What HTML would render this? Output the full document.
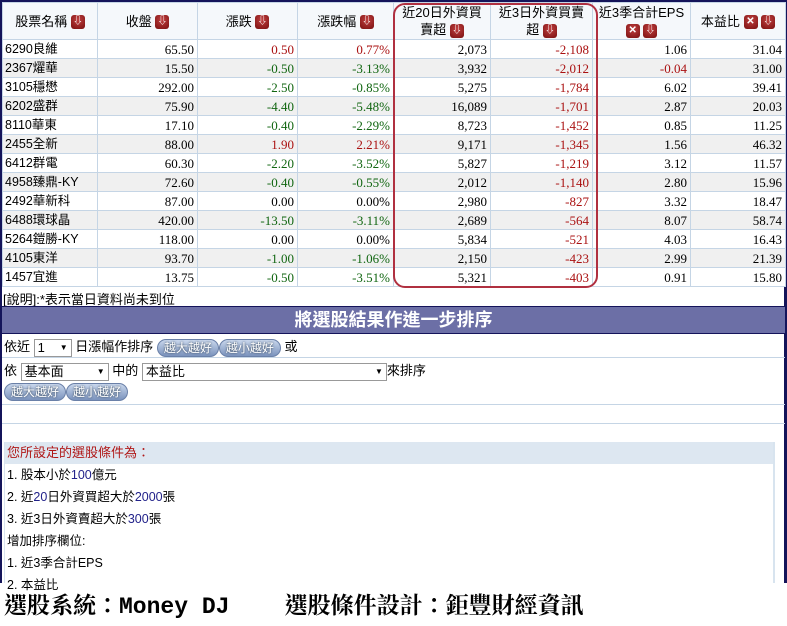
<!DOCTYPE html><html><head><meta charset="utf-8"><style>
*{margin:0;padding:0;box-sizing:border-box}
body{width:787px;height:626px;background:#fff;font-family:"Liberation Serif","Noto Serif CJK TC","Noto Sans CJK TC",serif;font-size:13px;color:#000;position:relative;overflow:hidden}
.a{position:absolute}
.nav{background:#14145a}
table{border-collapse:collapse;position:absolute;left:2px;top:2px;width:783px;table-layout:fixed}
td,th{border:1px solid #c5d5e5;height:19px;padding:0 3px;font-weight:normal;white-space:nowrap;overflow:hidden;line-height:17px}
th{height:37px;background:#f5f8fb;font-family:"Liberation Sans","Noto Sans CJK TC",sans-serif;font-size:13px;line-height:17px;white-space:normal}
td{text-align:right}
td:first-child{text-align:left;padding-left:2px;font-family:"Liberation Sans","Noto Sans CJK TC",sans-serif;font-size:12.5px}
tr:nth-child(odd) td{background:#f0f0f0}
tr:nth-child(even) td{background:#fff}
.r{color:#a11}.g{color:#161}
.ic{display:inline-block;width:14px;height:14px;border-radius:3px;background:radial-gradient(circle at 50% 35%,#c04040,#7a1010);color:#fff;font-size:10px;line-height:14px;text-align:center;vertical-align:middle;font-weight:bold}
.btn{display:inline-block;border-radius:9px;background:linear-gradient(#c9d7ec,#7b93bd);border:1px solid #6a80a8;color:#fff;font-size:12px;padding:0 6px;height:18px;line-height:16px;text-shadow:0 0 2px #234;vertical-align:middle}
.sel{display:inline-block;border:1px solid #999;background:#fff;height:18px;line-height:16px;vertical-align:middle;padding-left:3px;font-size:13px;position:relative}
.sel:after{content:"▼";position:absolute;right:3px;font-size:8px;top:0}
.sans{font-family:"Liberation Sans","Noto Sans CJK TC",sans-serif}
.b{color:#22228a}
</style></head><body>
<div class="a nav" style="left:0;top:0;width:787px;height:2px"></div>
<div class="a nav" style="left:0;top:0;width:2px;height:583px"></div>
<div class="a nav" style="left:784px;top:0;width:3px;height:583px"></div>
<table>
<colgroup><col style="width:95px"><col style="width:100px"><col style="width:100px"><col style="width:96px"><col style="width:97px"><col style="width:102px"><col style="width:98px"><col style="width:95px"></colgroup>
<tr><th>股票名稱 <span class="ic">⇩</span></th><th>收盤 <span class="ic">⇩</span></th><th>漲跌 <span class="ic">⇩</span></th><th>漲跌幅 <span class="ic">⇩</span></th><th>近20日外資買賣超 <span class="ic">⇩</span></th><th>近3日外資買賣超 <span class="ic">⇩</span></th><th>近3季合計EPS<br><span class="ic">✕</span> <span class="ic">⇩</span></th><th>本益比 <span class="ic">✕</span> <span class="ic">⇩</span></th></tr>
<tr><td>6290良維</td><td>65.50</td><td class="r">0.50</td><td class="r">0.77%</td><td>2,073</td><td class="r">-2,108</td><td>1.06</td><td>31.04</td></tr>
<tr><td>2367燿華</td><td>15.50</td><td class="g">-0.50</td><td class="g">-3.13%</td><td>3,932</td><td class="r">-2,012</td><td class="r">-0.04</td><td>31.00</td></tr>
<tr><td>3105穩懋</td><td>292.00</td><td class="g">-2.50</td><td class="g">-0.85%</td><td>5,275</td><td class="r">-1,784</td><td>6.02</td><td>39.41</td></tr>
<tr><td>6202盛群</td><td>75.90</td><td class="g">-4.40</td><td class="g">-5.48%</td><td>16,089</td><td class="r">-1,701</td><td>2.87</td><td>20.03</td></tr>
<tr><td>8110華東</td><td>17.10</td><td class="g">-0.40</td><td class="g">-2.29%</td><td>8,723</td><td class="r">-1,452</td><td>0.85</td><td>11.25</td></tr>
<tr><td>2455全新</td><td>88.00</td><td class="r">1.90</td><td class="r">2.21%</td><td>9,171</td><td class="r">-1,345</td><td>1.56</td><td>46.32</td></tr>
<tr><td>6412群電</td><td>60.30</td><td class="g">-2.20</td><td class="g">-3.52%</td><td>5,827</td><td class="r">-1,219</td><td>3.12</td><td>11.57</td></tr>
<tr><td>4958臻鼎-KY</td><td>72.60</td><td class="g">-0.40</td><td class="g">-0.55%</td><td>2,012</td><td class="r">-1,140</td><td>2.80</td><td>15.96</td></tr>
<tr><td>2492華新科</td><td>87.00</td><td>0.00</td><td>0.00%</td><td>2,980</td><td class="r">-827</td><td>3.32</td><td>18.47</td></tr>
<tr><td>6488環球晶</td><td>420.00</td><td class="g">-13.50</td><td class="g">-3.11%</td><td>2,689</td><td class="r">-564</td><td>8.07</td><td>58.74</td></tr>
<tr><td>5264鎧勝-KY</td><td>118.00</td><td>0.00</td><td>0.00%</td><td>5,834</td><td class="r">-521</td><td>4.03</td><td>16.43</td></tr>
<tr><td>4105東洋</td><td>93.70</td><td class="g">-1.00</td><td class="g">-1.06%</td><td>2,150</td><td class="r">-423</td><td>2.99</td><td>21.39</td></tr>
<tr><td>1457宜進</td><td>13.75</td><td class="g">-0.50</td><td class="g">-3.51%</td><td>5,321</td><td class="r">-403</td><td>0.91</td><td>15.80</td></tr>
</table>
<div class="a" style="left:393px;top:3px;width:205px;height:285px;border:2px solid #b03040;border-radius:12px"></div>
<div class="a sans" style="left:3px;top:289px;font-size:13px">[說明]:*表示當日資料尚未到位</div>
<div class="a nav" style="left:0;top:306px;width:787px;height:1px"></div>
<div class="a sans" style="left:2px;top:307px;width:783px;height:26px;background:#6c6fa6;color:#fff;font-size:18px;font-weight:bold;text-align:center;line-height:26px">將選股結果作進一步排序</div>
<div class="a nav" style="left:0;top:333px;width:787px;height:1px"></div>
<div class="a sans" style="left:4px;top:336px;font-size:13px">依近 <span class="sel" style="width:38px">1</span> 日漲幅作排序 <span class="btn">越大越好</span><span class="btn">越小越好</span> 或</div>
<div class="a" style="left:2px;top:357px;width:783px;height:1px;background:#c5d5e5"></div>
<div class="a sans" style="left:4px;top:360px;font-size:13px">依 <span class="sel" style="width:88px">基本面</span> 中的 <span class="sel" style="width:245px">本益比</span>來排序</div>
<div class="a sans" style="left:4px;top:383px"><span class="btn">越大越好</span><span class="btn">越小越好</span></div>
<div class="a" style="left:2px;top:404px;width:783px;height:1px;background:#c5d5e5"></div>
<div class="a" style="left:2px;top:423px;width:783px;height:1px;background:#c5d5e5"></div>
<div class="a sans" style="left:4px;top:442px;width:771px;height:141px;border-right:2px solid #d8e4ef;border-left:1px solid #d8e4ef">
<div style="background:#dde7f1;height:22px;line-height:22px;color:#b01818;padding-left:2px">您所設定的選股條件為：</div>
<div style="line-height:22px;padding-left:2px;font-size:12.5px">1. 股本小於<span class="b">100</span>億元<br>2. 近<span class="b">20</span>日外資買超大於<span class="b">2000</span>張<br>3. 近3日外資賣超大於<span class="b">300</span>張<br>增加排序欄位:<br>1. 近3季合計EPS<br>2. 本益比</div>
</div>
<div class="a" style="left:4px;top:587px;font-size:23px;font-weight:bold;font-family:'Liberation Mono','Noto Serif CJK TC',monospace;white-space:pre;letter-spacing:0">選股系統：Money DJ    選股條件設計：鉅豐財經資訊</div>
</body></html>
